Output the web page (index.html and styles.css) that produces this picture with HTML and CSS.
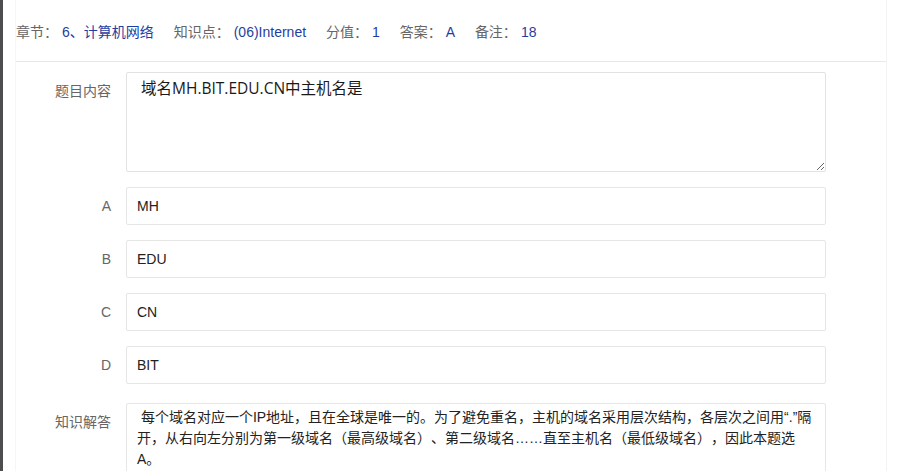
FILE: index.html
```html
<!DOCTYPE html>
<html lang="zh-CN">
<head>
  <meta charset="utf-8">
  <link rel="stylesheet" href="styles.css">
</head>
<body>
  <div class="page">
    <div class="card">
      <div class="meta">
        <span class="meta-label">章节：</span><span class="meta-value">6、计算机网络</span>
        <span class="meta-label">知识点：</span><span class="meta-value">(06)Internet</span>
        <span class="meta-label">分值：</span><span class="meta-value">1</span>
        <span class="meta-label">答案：</span><span class="meta-value">A</span>
        <span class="meta-label">备注：</span><span class="meta-value">18</span>
      </div>
      <form class="question-form">
        <div class="row">
          <label class="row-label">题目内容</label>
          <textarea class="question-text"> 域名MH.BIT.EDU.CN中主机名是</textarea>
        </div>
        <div class="row">
          <label class="row-label">A</label>
          <input class="option" type="text" value="MH">
        </div>
        <div class="row">
          <label class="row-label">B</label>
          <input class="option" type="text" value="EDU">
        </div>
        <div class="row">
          <label class="row-label">C</label>
          <input class="option" type="text" value="CN">
        </div>
        <div class="row row-last">
          <label class="row-label">D</label>
          <input class="option" type="text" value="BIT">
        </div>
        <div class="row">
          <label class="row-label">知识解答</label>
          <div class="answer-text">&nbsp;每个域名对应一个IP地址，且在全球是唯一的。为了避免重名，主机的域名采用层次结构，各层次之间用“.”隔开，从右向左分别为第一级域名（最高级域名）、第二级域名……直至主机名（最低级域名），因此本题选A。</div>
        </div>
      </form>
    </div>
  </div>
</body>
</html>
```

FILE: styles.css
```css
html, body {
  margin: 0;
  height: 100%;
  overflow: hidden;
  background: #fff;
}
body {
  font-family: "Liberation Sans", Arial, "Noto Sans CJK SC", sans-serif;
  font-size: 14px;
  color: #333;
  text-spacing-trim: space-all;
}
.page {
  height: 100%;
  border-left: 3px solid #4d4d4f;
  padding-left: 12px;
}
.card {
  width: 872px;
  height: 100%;
  border-left: 1px solid #f6f6f6;
  border-right: 1px solid #f3f3f3;
  box-sizing: border-box;
}
.meta {
  height: 61px;
  line-height: 64px;
  border-bottom: 1px solid #e8e8e8;
  white-space: nowrap;
}
.meta-label {
  color: #666;
  margin-right: 4px;
}
.meta-value {
  color: #1f3ea0;
  margin-right: 16px;
}
.question-form {
  padding-top: 10px;
}
.row {
  display: flex;
  align-items: flex-start;
  margin-bottom: 15px;
}
.row-last {
  margin-bottom: 19px;
}
.row-label {
  width: 110px;
  padding-right: 15px;
  box-sizing: border-box;
  text-align: right;
  line-height: 38px;
  color: #666;
}
.question-text {
  width: 700px;
  height: 100px;
  box-sizing: border-box;
  border: 1px solid #e2e2e2;
  border-radius: 2px;
  padding: 4px 10px;
  font-family: "Open Sans", "Noto Sans CJK SC", sans-serif;
  font-size: 15.5px;
  line-height: 22px;
  color: #1a1a1a;
  resize: vertical;
  outline: none;
  text-spacing-trim: space-all;
}
.option {
  width: 700px;
  height: 38px;
  box-sizing: border-box;
  border: 1px solid #e6e6e6;
  border-radius: 2px;
  padding: 0 10px;
  font-family: "Liberation Sans", Arial, sans-serif;
  font-size: 14px;
  color: #222;
  outline: none;
}
.answer-text {
  width: 700px;
  min-height: 100px;
  box-sizing: border-box;
  border: 1px solid #e6e6e6;
  border-radius: 2px;
  padding: 3px 10px;
  line-height: 21px;
  color: #222;
}
```
